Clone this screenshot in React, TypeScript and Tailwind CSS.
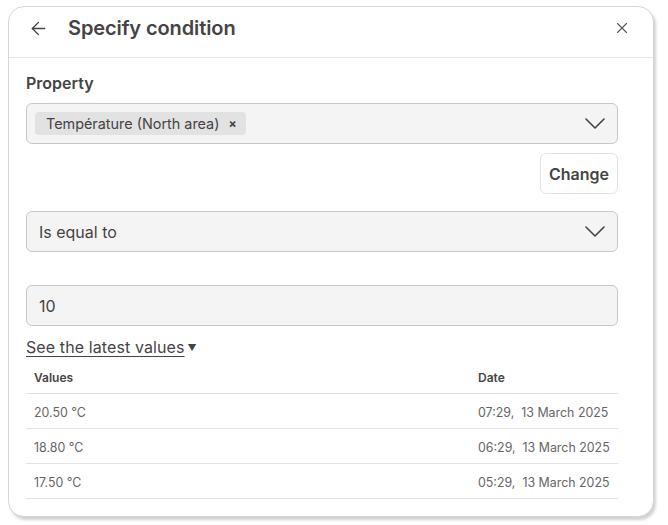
import { ArrowLeft, X } from 'lucide-react'

const ROWS = [
  { value: '20.50 °C', date: '07:29,  13 March 2025' },
  { value: '18.80 °C', date: '06:29,  13 March 2025' },
  { value: '17.50 °C', date: '05:29,  13 March 2025' },
]

function Chevron() {
  return (
    <svg width="20" height="11" viewBox="0 0 20 11" fill="none" className="ml-auto text-[#444]">
      <polyline points="1,1 10,10 19,1" stroke="currentColor" strokeWidth="1.6" strokeLinecap="round" strokeLinejoin="round" />
    </svg>
  )
}

export default function App() {
  return (
    <div className="w-[668px] h-[525px] bg-white pt-[6px] pl-[8px] font-['Inter',sans-serif] text-[#444]">
      <div className="w-[646px] h-[511px] rounded-[16px] border border-[#d6d6d6] bg-white shadow-[2px_3px_3px_rgba(0,0,0,0.18)] flex flex-col">
        {/* Header */}
        <div className="h-[51px] flex items-center border-b border-[#e6e6e6] pl-[19px] pr-[22px] pb-[8px] shrink-0">
          <ArrowLeft size={21} strokeWidth={1.6} className="text-[#444]" />
          <h1 className="ml-[19px] text-[20px] font-semibold text-[#444] tracking-[-0.1px]">Specify condition</h1>
          <X size={18} strokeWidth={1.5} className="ml-auto text-[#555]" />
        </div>

        {/* Body */}
        <div className="pl-[17px] pr-[35px] pt-[13px] flex flex-col">
          <label className="text-[16px] font-semibold leading-[24px]">Property</label>
          <div className="mt-[8px] h-[41px] rounded-[6px] border border-[#c8c8c8] bg-[#f4f4f4] flex items-center pl-[8px] pr-[12px]">
            <span className="h-[23px] rounded-[4px] bg-[#e2e2e2] pl-[11px] pr-[9px] flex items-center gap-[9px] text-[14.4px] text-[#444]">
              Température (North area)
              <span className="text-[12px] font-bold">×</span>
            </span>
            <Chevron />
          </div>

          <div className="flex justify-end mt-[9px]">
            <button className="h-[41px] px-[8px] rounded-[6px] border border-[#e3e3e3] bg-white text-[16px] font-semibold text-[#444]">
              Change
            </button>
          </div>

          <div className="mt-[17px] h-[41px] rounded-[6px] border border-[#c8c8c8] bg-[#f4f4f4] flex items-center pl-[12px] pr-[12px]">
            <span className="text-[16px]">Is equal to</span>
            <Chevron />
          </div>

          <div className="mt-[33px] h-[41px] rounded-[6px] border border-[#c8c8c8] bg-[#f4f4f4] flex items-center pl-[12px]">
            <span className="text-[16px]">10</span>
          </div>

          <div className="mt-[9px] flex items-center">
            <span className="text-[16px] tracking-[0.1px] underline underline-offset-[3px] decoration-[1px]">See the latest values</span>
            <span className="text-[9px] ml-[3px] mt-[1px]">▼</span>
          </div>

          <table className="mt-[5px] w-full text-left border-collapse">
            <thead>
              <tr className="border-b border-[#e3e3e3]">
                <th className="h-[29px] pl-[8px] text-[12px] font-semibold text-[#444]">Values</th>
                <th className="w-[148px] pl-[8px] text-[12px] font-semibold text-[#444]">Date</th>
              </tr>
            </thead>
            <tbody>
              {ROWS.map((r) => (
                <tr key={r.value} className="border-b border-[#e3e3e3]">
                  <td className="h-[35px] pl-[8px] pt-[5px] text-[12.4px] text-[#666]">{r.value}</td>
                  <td className="pl-[8px] pt-[5px] text-[12.4px] text-[#666] whitespace-pre">{r.date}</td>
                </tr>
              ))}
            </tbody>
          </table>
        </div>
      </div>
    </div>
  )
}
